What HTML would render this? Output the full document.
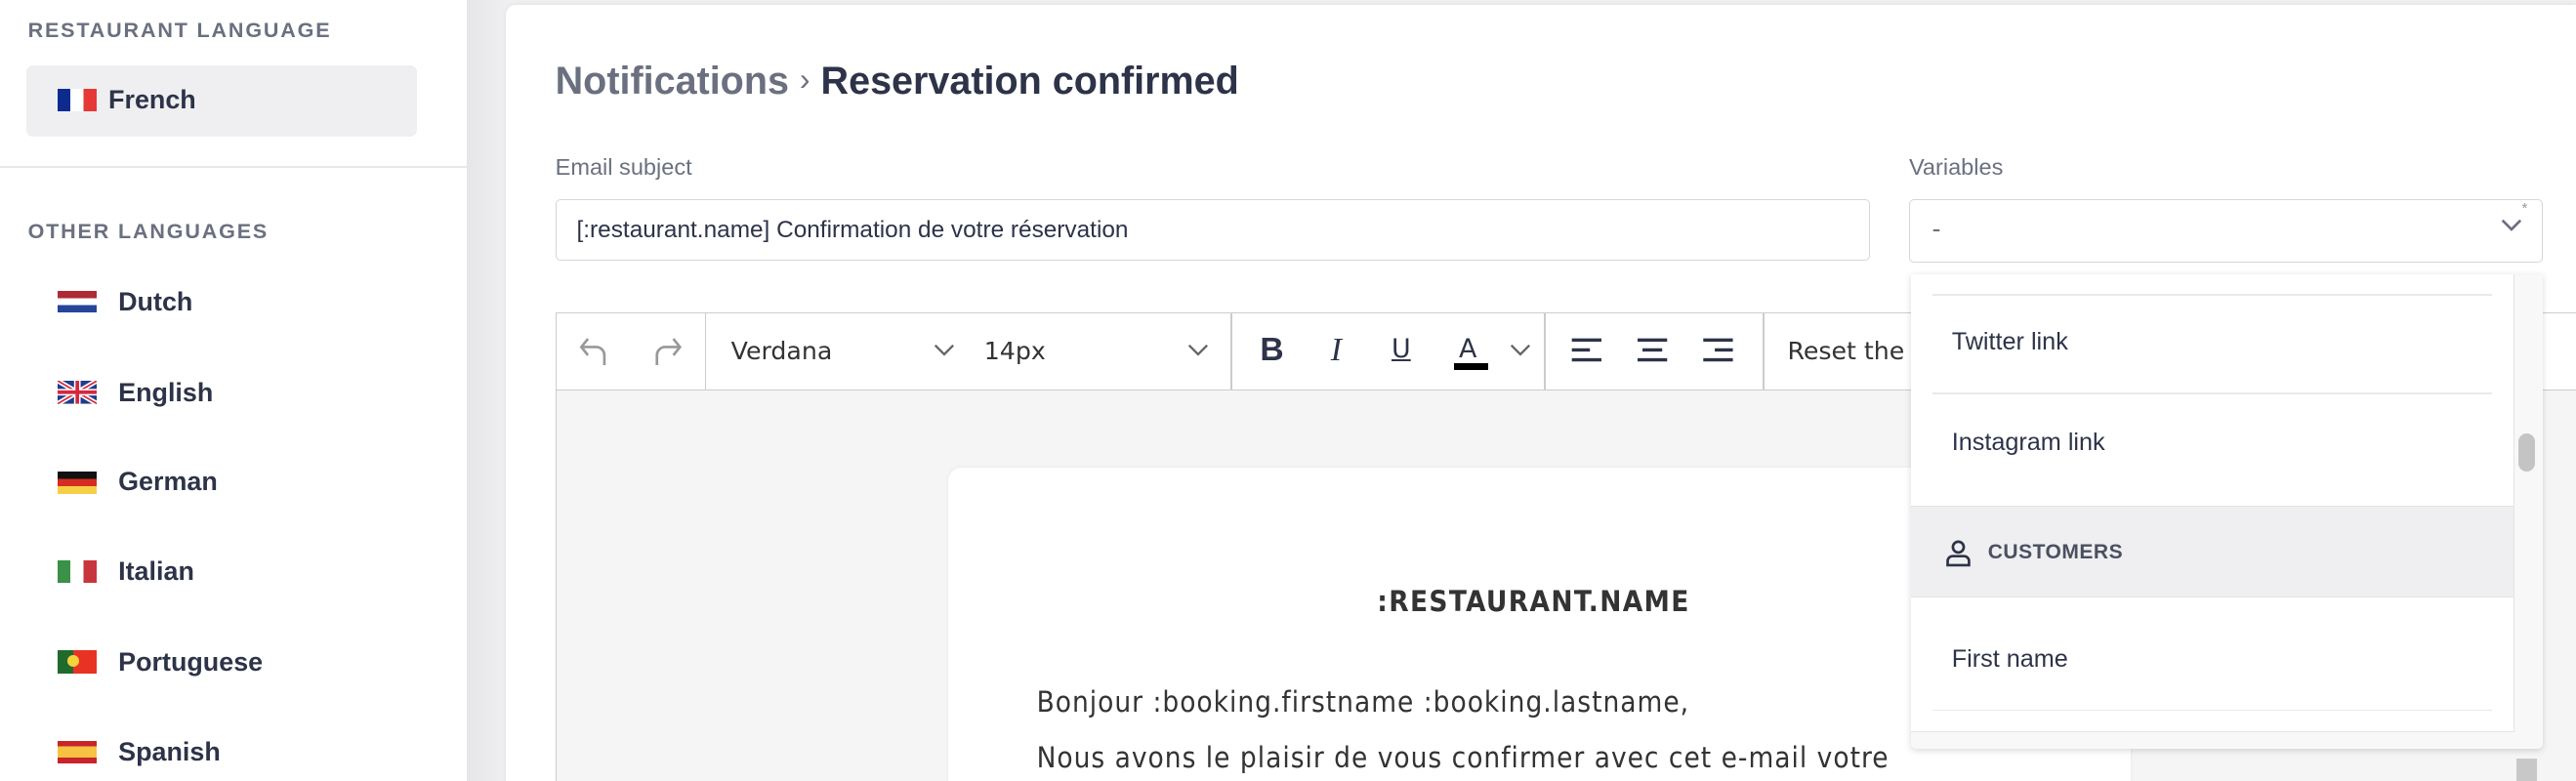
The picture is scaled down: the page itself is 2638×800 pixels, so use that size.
<!DOCTYPE html>
<html><head><meta charset="utf-8"><style>
html,body{margin:0;padding:0;width:2638px;height:800px;overflow:hidden;background:#efeff1}
#z{zoom:1.68240;width:1568px;height:476px;position:relative;font-family:"Liberation Sans",sans-serif;color:#2d3348}
.a{position:absolute}
.side{left:0;top:0;width:284px;height:476px;background:#fff}
.strip{left:284px;top:0;width:24px;height:476px;background:linear-gradient(90deg,#e6e6e8,#efeff1)}
.cap{font-size:12.8px;font-weight:bold;letter-spacing:1.1px;color:#6b7080}
.lang{font-size:16px;font-weight:bold;color:#2d3348}
.flag{width:24px;height:14px}
.card{left:308px;top:3px;width:1260px;height:480px;background:#fff;border-radius:6px 0 0 0;box-shadow:0 0 3px rgba(0,0,0,.08)}
.lbl{font-size:14px;color:#6b7080}
.inp{border:1px solid #d6d6da;border-radius:3px;background:#fff;box-sizing:border-box}
.tb{font-family:"DejaVu Sans",sans-serif}
.ver{font-family:"DejaVu Sans Condensed","DejaVu Sans",sans-serif;color:#333}
.it{font-size:15px;color:#2d3348}
.ln{height:1px;background:#e9e9ec}
</style></head><body><div id="z">
<div class="a side"></div>
<div class="a strip"></div>
<div class="a cap" style="left:17px;top:11px">RESTAURANT LANGUAGE</div>
<div class="a" style="left:16px;top:40px;width:238px;height:43px;background:#efeff1;border-radius:4px"></div>
<div class="a flag" style="left:35px;top:54px;background:linear-gradient(90deg,#0d2b8f 33%,#fff 33% 66%,#e53935 66%)"></div>
<div class="a lang" style="left:66px;top:52px">French</div>
<div class="a" style="left:0;top:101px;width:284px;height:1px;background:#e8e8ea"></div>
<div class="a cap" style="left:17px;top:134px">OTHER LANGUAGES</div>

<div class="a flag" style="left:35px;top:177px;height:13px;background:linear-gradient(#ae2b34 33%,#fff 33% 66%,#26449a 66%)"></div>
<div class="a lang" style="left:72px;top:175px">Dutch</div>
<svg class="a" style="left:35px;top:232px" width="24" height="14" viewBox="0 0 24 14"><rect width="24" height="14" fill="#1f3c8c"/><path d="M0 0L24 14M24 0L0 14" stroke="#fff" stroke-width="3"/><path d="M0 0L24 14M24 0L0 14" stroke="#d4283a" stroke-width="1"/><path d="M12 0V14M0 7H24" stroke="#fff" stroke-width="4"/><path d="M12 0V14M0 7H24" stroke="#d4283a" stroke-width="2.2"/></svg>
<div class="a lang" style="left:72px;top:230px">English</div>
<div class="a flag" style="left:35px;top:287px;background:linear-gradient(#111 33%,#d42c20 33% 66%,#f6cf47 66%)"></div>
<div class="a lang" style="left:72px;top:284px">German</div>
<div class="a flag" style="left:35px;top:341px;background:linear-gradient(90deg,#3a9147 33%,#fff 33% 66%,#c9353d 66%)"></div>
<div class="a lang" style="left:72px;top:339px">Italian</div>
<div class="a flag" style="left:35px;top:396px;background:linear-gradient(90deg,#1f6b2e 40%,#e83324 40%)"><div style="position:absolute;left:6px;top:3px;width:7px;height:7px;border-radius:50%;background:#f4d23a"></div></div>
<div class="a lang" style="left:72px;top:394px">Portuguese</div>
<div class="a flag" style="left:35px;top:451px;background:linear-gradient(#c8242b 25%,#f6c343 25% 75%,#c8242b 75%)"></div>
<div class="a lang" style="left:72px;top:449px">Spanish</div>

<div class="a card"></div>
<div class="a" style="left:338px;top:36px;font-size:23.5px;font-weight:bold"><span style="color:#6b7080">Notifications</span> <span style="color:#6b7080;font-weight:normal;font-size:19px;position:relative;top:-2px">›</span> Reservation confirmed</div>
<div class="a lbl" style="left:338px;top:94px">Email subject</div>
<div class="a inp" style="left:338px;top:121px;width:800px;height:38px"></div>
<div class="a" style="left:351px;top:132px;font-size:14.5px">[:restaurant.name] Confirmation de votre réservation</div>
<div class="a lbl" style="left:1162px;top:94px">Variables</div>
<div class="a inp" style="left:1162px;top:121px;width:386px;height:39px"></div>
<div class="a" style="left:1176px;top:130px;color:#6b7080">-</div>
<svg class="a" style="left:1522px;top:133px" width="13" height="9"><path d="M1 1l5.5 5.5L12 1" fill="none" stroke="#6b7080" stroke-width="1.6"/></svg>
<div class="a" style="left:1535px;top:122px;font-size:9px;color:#999">*</div>

<!-- editor -->
<div class="a" style="left:338px;top:190px;width:1230px;height:290px;border:1px solid #ccc;border-right:none;background:#f5f5f5;box-sizing:border-box"></div>
<div class="a" style="left:339px;top:191px;width:1229px;height:46px;background:#fff;border-bottom:1px solid #ccc"></div>
<div class="a" style="left:429px;top:191px;width:1px;height:46px;background:#ccc"></div>
<div class="a" style="left:749px;top:191px;width:1px;height:46px;background:#ccc"></div>
<div class="a" style="left:940px;top:191px;width:1px;height:46px;background:#ccc"></div>
<div class="a" style="left:1073px;top:191px;width:1px;height:46px;background:#ccc"></div>
<svg class="a" style="left:352px;top:203px" width="70" height="22"><path d="M6 3L2 8l4 5M2 8h9a5 5 0 0 1 5 5v6" fill="none" stroke="#999" stroke-width="1.6"/><path d="M58 3l4 5-4 5M62 8h-9a5 5 0 0 0-5 5v6" fill="none" stroke="#999" stroke-width="1.6"/></svg>
<div class="a tb" style="left:445px;top:205px;font-size:15px;color:#333">Verdana</div>
<svg class="a" style="left:568px;top:209px" width="13" height="9"><path d="M1 1l5.5 5.5L12 1" fill="none" stroke="#666" stroke-width="1.4"/></svg>
<div class="a tb" style="left:599px;top:205px;font-size:15px;color:#333">14px</div>
<svg class="a" style="left:723px;top:209px" width="13" height="9"><path d="M1 1l5.5 5.5L12 1" fill="none" stroke="#666" stroke-width="1.4"/></svg>
<div class="a" style="left:767px;top:202px;font-size:20px;font-weight:bold;color:#2d3348">B</div>
<div class="a" style="left:810px;top:202px;font-size:20px;font-style:italic;font-family:'Liberation Serif',serif;color:#2d3348">I</div>
<div class="a tb" style="left:847px;top:203px;font-size:16px;text-decoration:underline;color:#2d3348">U</div>
<div class="a tb" style="left:888px;top:203px;font-size:16px;color:#2d3348">A</div>
<div class="a" style="left:885px;top:221px;width:21px;height:4px;background:#000"></div>
<svg class="a" style="left:919px;top:209px" width="13" height="9"><path d="M1 1l5.5 5.5L12 1" fill="none" stroke="#666" stroke-width="1.4"/></svg>
<svg class="a" style="left:956px;top:205px" width="110" height="18"><g stroke="#2d3348" stroke-width="2"><path d="M1 2h18M1 8h11M1 14h18"/><path d="M41 2h18M44 8h12M41 14h18"/><path d="M81 2h18M88 8h11M81 14h18"/></g></svg>
<div class="a tb" style="left:1088px;top:205px;font-size:15px;color:#333">Reset the</div>

<div class="a" style="left:577px;top:285px;width:720px;height:200px;background:#fff;border-radius:8px 8px 0 0;box-shadow:0 0 2px rgba(0,0,0,.08)"></div>
<div class="a ver" style="left:577px;top:356px;width:713px;text-align:center;font-weight:bold;font-size:17.5px;letter-spacing:0.8px">:RESTAURANT.NAME</div>
<div class="a ver" style="left:631px;top:417px;font-size:17.5px;letter-spacing:0.6px">Bonjour :booking.firstname :booking.lastname,</div>
<div class="a ver" style="left:631px;top:451px;font-size:17.5px;letter-spacing:0.6px">Nous avons le plaisir de vous confirmer avec cet e-mail votre</div>
<div class="a" style="left:1532px;top:462px;width:12px;height:20px;background:#c8c8c8"></div>

<!-- dropdown -->
<div class="a" style="left:1163px;top:167px;width:385px;height:289px;background:#f8f8f8;box-shadow:0 1px 4px rgba(0,0,0,.15);border-radius:0 0 3px 3px"></div>
<div class="a" style="left:1163px;top:167px;width:367px;height:278px;background:#fff;border-right:1px solid #e4e4e6;border-bottom:1px solid #e4e4e6"></div>
<div class="a ln" style="left:1176px;top:179px;width:341px"></div>
<div class="a it" style="left:1188px;top:200px">Twitter link</div>
<div class="a ln" style="left:1176px;top:239px;width:341px"></div>
<div class="a it" style="left:1188px;top:261px">Instagram link</div>
<div class="a" style="left:1163px;top:308px;width:367px;height:56px;background:#efeff1;border-top:1px solid #e4e4e6;border-bottom:1px solid #e4e4e6;box-sizing:border-box"></div>
<svg class="a" style="left:1184px;top:328px" width="16" height="18"><circle cx="8" cy="5" r="3.3" fill="none" stroke="#2d3348" stroke-width="1.6"/><path d="M1.5 16v-2.5a3 3 0 0 1 3-3h7a3 3 0 0 1 3 3V16z" fill="none" stroke="#2d3348" stroke-width="1.6"/></svg>
<div class="a" style="left:1210px;top:329px;font-size:12.5px;font-weight:bold;color:#4a5060;letter-spacing:.3px">CUSTOMERS</div>
<div class="a it" style="left:1188px;top:393px">First name</div>
<div class="a ln" style="left:1176px;top:432px;width:341px"></div>
<div class="a" style="left:1533px;top:264px;width:10px;height:23px;border-radius:5px;background:#c4c4c4"></div>
</div></body></html>
